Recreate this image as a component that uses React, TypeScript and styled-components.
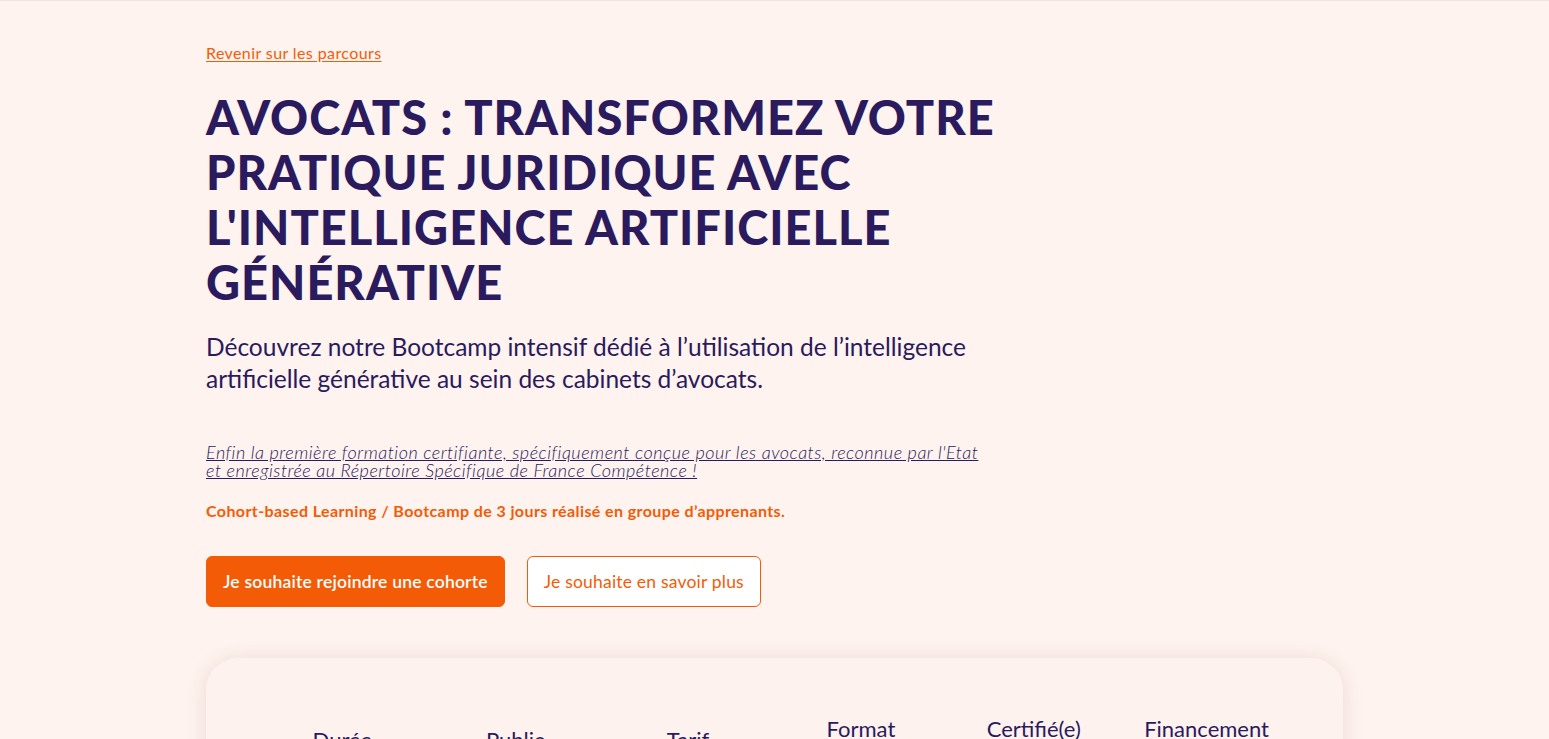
import React from 'react'
import styled, { createGlobalStyle } from 'styled-components'

const GlobalStyle = createGlobalStyle`
  html, body {
    margin: 0;
    padding: 0;
    background: #fef3ee;
    font-family: Lato, "Noto Sans", sans-serif;
    color: #2a1a5e;
  }
  * { box-sizing: border-box; }
`

const Page = styled.div`
  min-height: 739px;
  border-top: 1px solid #f3e3dd;
  overflow: hidden;
`

const Hero = styled.section`
  width: 1137px;
  margin: 0 auto;
  padding-top: 42px;
  display: flex;
  flex-direction: column;
`

const Content = styled.div`
  width: 800px;
  display: flex;
  flex-direction: column;
`

const BackLink = styled.a`
  font-size: 16px;
  letter-spacing: 0.4px;
  color: #f45b06;
  text-decoration: underline;
  text-underline-offset: 2px;
  line-height: 20px;
  cursor: pointer;
`

const Title = styled.h1`
  margin: 27px 0 0;
  font-size: 47px;
  line-height: 55px;
  font-weight: 900;
  letter-spacing: 1px;
  text-transform: uppercase;
`

const Lead = styled.p`
  margin: 21px 0 0;
  font-size: 24.5px;
  line-height: 32px;
  font-weight: 400;
  width: 790px;
`

const Note = styled.p`
  margin: 48px 0 0;
  font-size: 18px;
  line-height: 18px;
  letter-spacing: 0.5px;
  font-style: italic;
  font-weight: 300;
  text-decoration: underline;
  width: 785px;
`

const Highlight = styled.p`
  margin: 22px 0 0;
  font-size: 16px;
  letter-spacing: 0.4px;
  line-height: 20px;
  font-weight: 700;
  color: #f45b06;
`

const Actions = styled.div`
  display: flex;
  gap: 22px;
  margin-top: 35px;
`

const Button = styled.button<{ $primary?: boolean }>`
  height: 51px;
  padding: 0 16px;
  border-radius: 6px;
  font-family: inherit;
  font-size: 17.5px;
  letter-spacing: 0.2px;
  cursor: pointer;
  border: 1px solid #f45b06;
  background: ${p => (p.$primary ? '#f45b06' : '#ffffff')};
  color: ${p => (p.$primary ? '#ffffff' : '#f45b06')};
  font-weight: ${p => (p.$primary ? 600 : 400)};
`

const InfoCard = styled.div`
  margin-top: 51px;
  border-radius: 32px;
  background: #fdf2ee;
  box-shadow: 0 2px 20px rgba(120, 70, 50, 0.14);
  padding: 57px 50px 40px;
  display: grid;
  grid-template-columns: repeat(6, 1fr);
  align-items: center;
`

const InfoItem = styled.div`
  display: flex;
  flex-direction: column;
  align-items: center;
  text-align: center;
`

const InfoLabel = styled.div`
  font-size: 22px;
  line-height: 28px;
`

const InfoValue = styled.div`
  margin-top: 8px;
  font-size: 16px;
  line-height: 22px;
  font-weight: 700;
`

const infos = [
  { label: 'Durée', value: ['3 jours'] },
  { label: 'Public', value: ['Avocats'] },
  { label: 'Tarif', value: ['2 490 € HT'] },
  { label: 'Format', value: ['Présentiel', 'ou distanciel'] },
  { label: 'Certifié(e)', value: ['RS France', 'Compétences'] },
  { label: 'Financement', value: ['FIF-PL', 'OPCO'] },
]

export default function App() {
  return (
    <Page>
      <GlobalStyle />
      <Hero>
        <Content>
          <BackLink>Revenir sur les parcours</BackLink>
          <Title>
            Avocats : transformez votre pratique juridique avec l'intelligence artificielle générative
          </Title>
          <Lead>
            Découvrez notre Bootcamp intensif dédié à l’utilisation de l’intelligence artificielle
            générative au sein des cabinets d’avocats.
          </Lead>
          <Note>
            Enfin la première formation certifiante, spécifiquement conçue pour les avocats, reconnue
            par l'Etat et enregistrée au Répertoire Spécifique de France Compétence !
          </Note>
          <Highlight>Cohort-based Learning / Bootcamp de 3 jours réalisé en groupe d’apprenants.</Highlight>
          <Actions>
            <Button $primary>Je souhaite rejoindre une cohorte</Button>
            <Button>Je souhaite en savoir plus</Button>
          </Actions>
        </Content>
        <InfoCard>
          {infos.map(info => (
            <InfoItem key={info.label}>
              <InfoLabel>{info.label}</InfoLabel>
              <InfoValue>
                {info.value.map((v, i) => (
                  <React.Fragment key={v}>
                    {i > 0 && <br />}
                    {v}
                  </React.Fragment>
                ))}
              </InfoValue>
            </InfoItem>
          ))}
        </InfoCard>
      </Hero>
    </Page>
  )
}
